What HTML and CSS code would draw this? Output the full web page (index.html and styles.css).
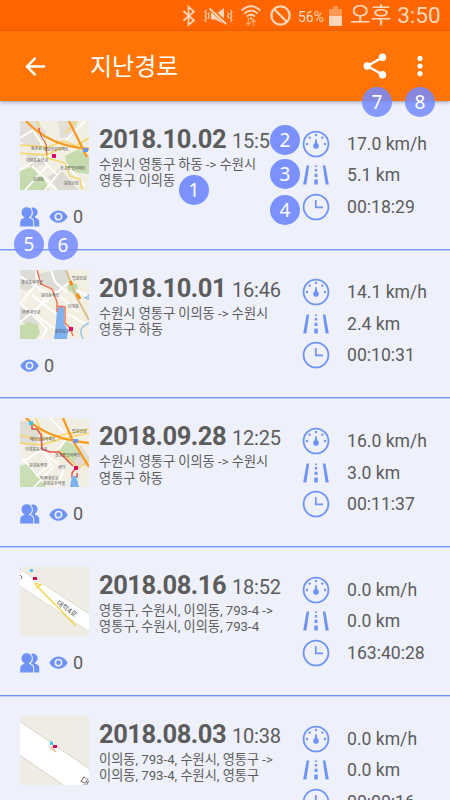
FILE: index.html
```html
<!DOCTYPE html>
<html lang="ko">
<head>
<meta charset="utf-8">
<title>지난경로</title>
<link rel="stylesheet" href="styles.css">
</head>
<body>
<svg class="defs" aria-hidden="true">
  <symbol id="gauge" viewBox="0 0 28 28"><circle cx="14" cy="14" r="12.4" fill="none" stroke="currentColor" stroke-width="1.8"/><g fill="currentColor"><circle cx="14" cy="5" r="1.2"/><circle cx="7.6" cy="7.6" r="1.2"/><circle cx="20.4" cy="7.6" r="1.2"/><circle cx="5" cy="14" r="1.2"/><circle cx="23" cy="14" r="1.2"/><path d="M13.4 9h1.200l.7 4.200c2.700 1.500 1.700 5.600-1.300 5.600s-4-4.100-1.300-5.600z"/></g></symbol>
  <symbol id="road" viewBox="0 0 28 20"><path fill="currentColor" d="M4.600.5h2.600L4.400 19.500H1.200zM20.800.5h2.600l3.400 19h-3.200zM13.100.5h1.900v1.600h-1.900zM12.900 4h2.300v2.500h-2.300zM12.600 8.700h2.900v3.200h-2.900zM12.300 14.500h3.500v5h-3.500z"/></symbol>
  <symbol id="clock" viewBox="0 0 28 28"><circle cx="14" cy="14" r="12.4" fill="none" stroke="currentColor" stroke-width="1.8"/><path d="M13.800 7v7.300h7.200" fill="none" stroke="currentColor" stroke-width="1.700"/></symbol>
  <symbol id="people" viewBox="0 0 20 20"><g fill="currentColor"><circle cx="13" cy="5.200" r="4.600"/><path d="M11 8.500h4v2.300c2.800.4 4.300 1.800 4.300 4.700v4H9z"/></g><g fill="currentColor" stroke="#eef1fb" stroke-width="2" paint-order="stroke"><path d="M6.700.3c6.400 0 6.400 8.300 2.300 9.900v.7c2.700.4 4.200 1.900 4.200 4.700v3.900H.2v-3.900c0-2.800 1.500-4.300 4.200-4.700v-.7C.300 8.600.300.300 6.700.300z"/></g></symbol>
  <symbol id="eye" viewBox="0 0 20 14"><path fill="currentColor" d="M.3 7C4.800-1.500 15.200-1.500 19.700 7 15.200 15.500 4.800 15.500.3 7z"/><circle cx="10" cy="7" r="3.300" fill="#6f94f6" stroke="#eef1fb" stroke-width="1.700"/></symbol>
</svg>

<header class="status">
  <svg class="s-bt" viewBox="0 0 14 22"><path d="M1.500 6l10.500 9.500-5.500 4.500V1.800L12 6.500 1.500 15.500"/></svg>
  <svg class="s-mute" viewBox="0 0 29 18"><path d="M2.500 3L1 5l1.500 2L1 9l1.500 2L1 13l1.500 2M5.200 5.500L4.300 7l.9 1.500L4.300 10l.9 1.500M26.500 3L28 5l-1.500 2L28 9l-1.500 2 1.500 2-1.500 2M23.800 5.500l.9 1.500-.9 1.500.9 1.500-.9 1.500" stroke-width="1.200"/><path class="solid" d="M7 5.500h4l9 6V1l-6 4.500zM7 5.500v7h4l8.500 4V13z"/><path d="M6 1.500L23 17" class="slash"/><path d="M5.500 1.500L22 17" stroke-width="2"/></svg>
  <svg class="s-wifi" viewBox="0 0 22 23"><path d="M1.500 6.500Q11-2 20.500 6.500M4.300 9.500Q11 3.700 17.700 9.500M7 12.500Q11 9 15 12.500" stroke-width="1.800"/><circle class="solid" cx="11" cy="14.500" r="1.300"/><path opacity=".55" d="M8.500 14v7M6.500 18.500l2 2.500 2-2.500M13.500 22v-6M11.500 18l2-2.500 2 2.500" stroke-width="1.400"/></svg>
  <svg class="s-block" viewBox="0 0 20 20"><circle cx="10" cy="10" r="8.700"/><path d="M4 4l12 12"/></svg>
  <span class="pct">56%</span>
  <svg class="s-bat" viewBox="0 0 13 20"><path class="solid" opacity=".45" d="M4 0h5v3h4v7H0V3h4z"/><path class="solid" d="M0 10h13v10H0z"/></svg>
  <span class="time">오후 3:50</span>
</header>
<nav class="bar">
  <svg class="back" viewBox="0 0 22 22"><path d="M21 11H2.500M11 2L2 11l9 9"/></svg>
  <h1>지난경로</h1>
  <svg class="share" viewBox="0 0 24 26"><path d="M20 4L4.500 13 20 22"/><circle cx="19.500" cy="4.300" r="3.700"/><circle cx="4.300" cy="13" r="3.700"/><circle cx="19.500" cy="21.700" r="3.700"/></svg>
  <svg class="more" viewBox="0 0 6 22"><circle cx="3" cy="3.400" r="2.600"/><circle cx="3" cy="11" r="2.600"/><circle cx="3" cy="18.600" r="2.600"/></svg>
</nav>

<main class="list">
  <article class="row">
    <div class="left">
      <svg class="map" viewBox="0 0 69 69"><rect width="69" height="69" fill="#f1eee3"/><path fill="#e2dfd9" d="M0 0h18l8 12-10 18L0 20zM38 0h20l-4 15-14 2zM6 32l16 2 3 10-14 3z"/><path fill="#c7dcae" d="M45 35l14-7 10 7v18l-15-2-7-7zM0 50l11-4 13 11 5 12H0z"/><path fill="#dcdad3" d="M28 56l12-8 18 21H38z"/><path d="M0 49l20-13 17 18 9-11 19 22M28 44L5 69M12 45l25 24M37 54l-12 15M0 17l13-8 17 27M65 0L46 19" fill="none" stroke="#fff" stroke-width="1.800"/><path d="M0 24l28 2 16-6 12 5 13-8M0 32l27 2 16-8M25 19l2 18 18 5 5 13 10 3 2 11M17 0l4 13M57 0L45 12" fill="none" stroke="#f6d568" stroke-width="1.500"/><path d="M6 0Q29 25 69 28M49 0l18 36" fill="none" stroke="#f59b21" stroke-width="2.300"/><path d="M19 8l2 7 5 8 1 11" fill="none" stroke="#d9573f"/><path fill="#df0770" d="M32 33h4v4h-4z"/><path fill="#e66" d="M18 7h2v3h-2z"/><path fill="#6d97e9" d="M63 27h5v4h-5z"/><g class="maptext"><text x="23" y="30">매탄공원아파트</text><text x="6" y="41">이의초등학교</text><text x="40" y="49">광교중앙아파트</text><text x="13" y="60">원천동</text><text x="44" y="64">원천교회</text><text x="11" y="29">동수원</text></g></svg>
      <div class="stats"><svg class="ic-people"><use href="#people"/></svg><svg class="ic-eye"><use href="#eye"/></svg><span>0</span></div>
    </div>
    <div class="info"><div class="when"><b>2018.10.02</b><span>15:5</span></div><p>수원시 영통구 하동 -&gt; 수원시<br>영통구 이의동</p></div>
    <ul class="nums"><li><svg><use href="#gauge"/></svg>17.0 km/h</li><li><svg class="ic-road"><use href="#road"/></svg>5.1 km</li><li><svg><use href="#clock"/></svg>00:18:29</li></ul>
  </article>
  <article class="row">
    <div class="left">
      <svg class="map" viewBox="0 0 69 69"><rect width="69" height="69" fill="#f3efe3"/><path fill="#dddcd7" d="M0 0h15l5 15L6 21 0 18zM18 4l17-4h12l2 15-13 8-12-10zM0 37l13 4 8 13-10 3-11-7z"/><path fill="#c6dbab" d="M0 56l8-4 10 3 2 8-4 6H0zM47 12l10 2 2 13-11-7z"/><path d="M16 0l1 13L0 34M0 52l56-45M9 40l30 22M12 25l28 22M2 35l25 24-6 10M0 6l28 18-14 19M35 21l22 21M31 0l4 12 12 10M56 20l13 7M48 44l18 10" fill="none" stroke="#fff" stroke-width="2"/><path d="M46 0l10 26 13 24" fill="none" stroke="#d6be8b" stroke-width="2"/><path d="M50 11l2 4M57 24l3 5" stroke="#f58c10" stroke-width="3"/><path fill="#7fb1ee" d="M37 38c4-4 8-2 7 5l0 10 4 8-1 8H34l2-16z"/><path d="M69 53c-9 4-10 9-6 16M65 28l4-3v4z" fill="none" stroke="#8dbdf1" stroke-width="1.300"/><path d="M17 0l4 14 11 5 5 13v10M37 36l8 1v16l5 5 3 8" fill="none" stroke="#ee795b" stroke-width="1.500"/><path fill="#e00566" d="M49 57h4v4h-4z"/><g class="maptext"><text x="1" y="14">광교호수마을</text><text x="21" y="27">원천동주민</text><text x="2" y="44">아주대학교</text><text x="48" y="38">이의동</text><text x="35" y="63">원천호수</text><text x="52" y="10">법원공원</text></g></svg>
      <div class="stats"><svg class="ic-eye"><use href="#eye"/></svg><span>0</span></div>
    </div>
    <div class="info"><div class="when"><b>2018.10.01</b><span>16:46</span></div><p>수원시 영통구 이의동 -&gt; 수원시<br>영통구 하동</p></div>
    <ul class="nums"><li><svg><use href="#gauge"/></svg>14.1 km/h</li><li><svg class="ic-road"><use href="#road"/></svg>2.4 km</li><li><svg><use href="#clock"/></svg>00:10:31</li></ul>
  </article>
  <article class="row">
    <div class="left">
      <svg class="map" viewBox="0 0 69 69"><rect width="69" height="69" fill="#f1eee3"/><path fill="#e0ddd6" d="M0 3h8l11 12-3 17L0 24zM53 34l8-7 8 12v9l-16-1z"/><path fill="#c9deb3" d="M38 33l8-11 14 9-7 14zM0 48l7-2 12 10 10 13H0z"/><path d="M0 45l22-13 9 14-15 12M20 32l24 19-7 18M34 48L14 69M30 0l18 19-9 12M2 40l26 29" fill="none" stroke="#fff" stroke-width="1.800"/><path d="M0 25l21 2 20-6 28-6M0 17l20 5 49-11M40 33l19 17 10-8M16 0l7 19" fill="none" stroke="#f6d568" stroke-width="1.500"/><path d="M6 0Q27 21 69 25M43 0l9 21 17 28" fill="none" stroke="#f59b21" stroke-width="2.300"/><path d="M12 6v5h5l4 6 1 14 8 3h9l14 14M56 50l-4 5v4h5v-4" fill="none" stroke="#e55346" stroke-width="1.500"/><path fill="#3dc5ea" d="M9 3h4v4H9z"/><path fill="#6d97e9" d="M53 21h5v4h-5z"/><path fill="#7db2ef" d="M52 58h4l3 11h-9z"/><path fill="#dc0761" d="M54 48h4v4h-4z"/><g class="maptext"><text x="10" y="23">매탄공원아파트</text><text x="5" y="33">이의초등학교</text><text x="35" y="39">광교중앙아파트</text><text x="9" y="49">원천동주민</text><text x="38" y="51">센터</text><text x="20" y="62">아주대학교</text><text x="52" y="15">법원공원</text><text x="23" y="67">원천호수마을</text></g></svg>
      <div class="stats"><svg class="ic-people"><use href="#people"/></svg><svg class="ic-eye"><use href="#eye"/></svg><span>0</span></div>
    </div>
    <div class="info"><div class="when"><b>2018.09.28</b><span>12:25</span></div><p>수원시 영통구 이의동 -&gt; 수원시<br>영통구 하동</p></div>
    <ul class="nums"><li><svg><use href="#gauge"/></svg>16.0 km/h</li><li><svg class="ic-road"><use href="#road"/></svg>3.0 km</li><li><svg><use href="#clock"/></svg>00:11:37</li></ul>
  </article>
  <article class="row">
    <div class="left">
      <svg class="map" viewBox="0 0 69 69"><rect width="69" height="69" fill="#efece4"/><path d="M-2 1l73 47v18L-2 18z" fill="#fff" stroke="#dfddd2"/><path d="M15 17l41 42M15 16l6 2-5 3" fill="none" stroke="#f0d337" stroke-width="1.200"/><path fill="#4fc6ed" d="M10 2h3v3h-3z"/><path fill="#cc0c54" d="M13 10h4v3h-4z"/><path d="M0 8l2 2-1 2" stroke="#777" fill="none"/><text class="roadname" transform="translate(36 37) rotate(35)">대학4로</text></svg>
      <div class="stats"><svg class="ic-people"><use href="#people"/></svg><svg class="ic-eye"><use href="#eye"/></svg><span>0</span></div>
    </div>
    <div class="info"><div class="when"><b>2018.08.16</b><span>18:52</span></div><p>영통구, 수원시, 이의동, 793-4 -&gt;<br>영통구, 수원시, 이의동, 793-4</p></div>
    <ul class="nums"><li><svg><use href="#gauge"/></svg>0.0 km/h</li><li><svg class="ic-road"><use href="#road"/></svg>0.0 km</li><li><svg><use href="#clock"/></svg>163:40:28</li></ul>
  </article>
  <article class="row">
    <div class="left">
      <svg class="map" viewBox="0 0 69 69"><rect width="69" height="69" fill="#efece4"/><path d="M-2 4l73 50v17H46L-2 38z" fill="#fff" stroke="#d6d4ca"/><path d="M30 31l6 5" stroke="#f0b36b" stroke-width="1.500"/><path fill="#48c4ec" d="M30 25l3 1v3h-3z"/><path fill="#d50758" d="M33 29h4v3h-4z"/><text class="roadname big" transform="translate(59 66) rotate(33)">대</text></svg>
    </div>
    <div class="info"><div class="when"><b>2018.08.03</b><span>10:38</span></div><p>이의동, 793-4, 수원시, 영통구 -&gt;<br>이의동, 793-4, 수원시, 영통구</p></div>
    <ul class="nums"><li><svg><use href="#gauge"/></svg>0.0 km/h</li><li><svg class="ic-road"><use href="#road"/></svg>0.0 km</li><li><svg><use href="#clock"/></svg>00:00:16</li></ul>
  </article>
</main>

<i class="badge b1">1</i><i class="badge b2">2</i><i class="badge b3">3</i><i class="badge b4">4</i>
<i class="badge b5">5</i><i class="badge b6">6</i><i class="badge b7">7</i><i class="badge b8">8</i>
</body>
</html>
```
FILE: styles.css
```css
* { box-sizing: border-box; margin: 0; padding: 0; }
body { position: relative; width: 450px; height: 800px; overflow: hidden; background: #eef1fb; color: #5c5c5c; font-family: Roboto, "Noto Sans CJK KR", sans-serif; }
html { overflow: hidden; }
svg { display: block; flex: none; }
.defs { position: absolute; width: 0; height: 0; }

.status { height: 31px; display: flex; align-items: center; background: #ff6500; color: #ffd6ba; padding-left: 182px; }
.status svg { fill: none; stroke: currentColor; stroke-width: 1.7; }
.status .solid { fill: currentColor; stroke: none; }
.status .slash { stroke: #ff6500; stroke-width: 4; }
.s-bt { width: 14px; height: 22px; }
.s-mute { width: 29px; height: 18px; margin-left: 8px; }
.s-wifi { width: 22px; height: 23px; margin-left: 7px; }
.s-block { width: 21px; height: 21px; margin-left: 8px; }
.status .s-block { stroke-width: 2.2; }
.pct { width: 30px; margin-left: 7px; font-size: 14px; line-height: 20px; padding-top: 2px; white-space: nowrap; }
.s-bat { width: 13px; height: 20px; margin-left: 1px; }
.time { margin-left: 8px; font-size: 22.6px; line-height: 30px; padding-top: 1px; font-weight: 400; white-space: nowrap; }

.bar { position: relative; height: 70px; display: flex; align-items: center; background: #ff7404; color: #fff; padding-left: 25px; box-shadow: 0 1px 4px rgba(60, 60, 80, .5); }
.bar h1 { margin-left: 44px; width: 249px; font-size: 24px; line-height: 34px; padding-top: 2px; font-weight: 400; white-space: nowrap; }
.back { width: 21px; height: 21px; fill: none; stroke: #fff; stroke-width: 2.5; }
.share { width: 24px; height: 26px; margin-left: 24px; fill: #fff; stroke: #fff; stroke-width: 0; }
.share path { fill: none; stroke-width: 2.5; }
.more { width: 6px; height: 22px; margin-left: 30px; fill: #fff; }

.list { height: 699px; overflow: hidden; }
.row { height: 148.7px; display: flex; align-items: flex-start; border-bottom: 1px solid #7396f2; box-shadow: 0 1px 0 rgba(115, 150, 242, .4); padding-left: 20px; }
.left { width: 79px; padding-top: 20px; }
.map { width: 69px; height: 69px; overflow: hidden; }
.maptext { font-size: 4px; fill: #444; }
.roadname { font-size: 7px; fill: #555; }
.big { font-size: 10px; }
.stats { display: flex; align-items: center; margin-top: 17px; height: 20px; color: #6f94f6; }
.ic-people { width: 20px; height: 20px; margin-right: 9px; }
.ic-eye { width: 19px; height: 13.3px; }
.stats span { margin-left: 5px; font-size: 18px; line-height: 20px; color: #5c5c5c; }

.info { width: 203px; padding-top: 22px; white-space: nowrap; }
.when { display: flex; align-items: baseline; height: 32px; line-height: 32px; }
.when b { width: 133px; font-size: 25.5px; font-weight: 700; letter-spacing: -.48px; }
.when span { font-size: 20px; letter-spacing: -.2px; }
.info p { font-size: 13.2px; line-height: 16.3px; margin-top: 2px; }

.nums { list-style: none; padding-top: 27px; color: #5c5c5c; }
.nums li { display: flex; align-items: center; height: 31.5px; font-size: 17.6px; white-space: nowrap; }
.nums svg { width: 28px; height: 28px; margin-right: 17px; color: #6f94f6; }
.nums .ic-road { height: 20px; }

.badge { position: absolute; width: 30px; height: 30px; border-radius: 50%; background: rgba(116, 139, 255, .95); color: #fff; font: normal 19px/30px "Noto Sans", sans-serif; text-align: center; }
.b1 { left: 179px; top: 175px; }
.b2 { left: 270px; top: 125px; }
.b3 { left: 270px; top: 159px; }
.b4 { left: 270px; top: 195px; }
.b5 { left: 14px; top: 229px; }
.b6 { left: 48px; top: 230px; }
.b7 { left: 362px; top: 87px; }
.b8 { left: 405px; top: 87px; }
.b5, .b6, .b7, .b8 { background: rgba(116, 139, 255, .86); }
```
